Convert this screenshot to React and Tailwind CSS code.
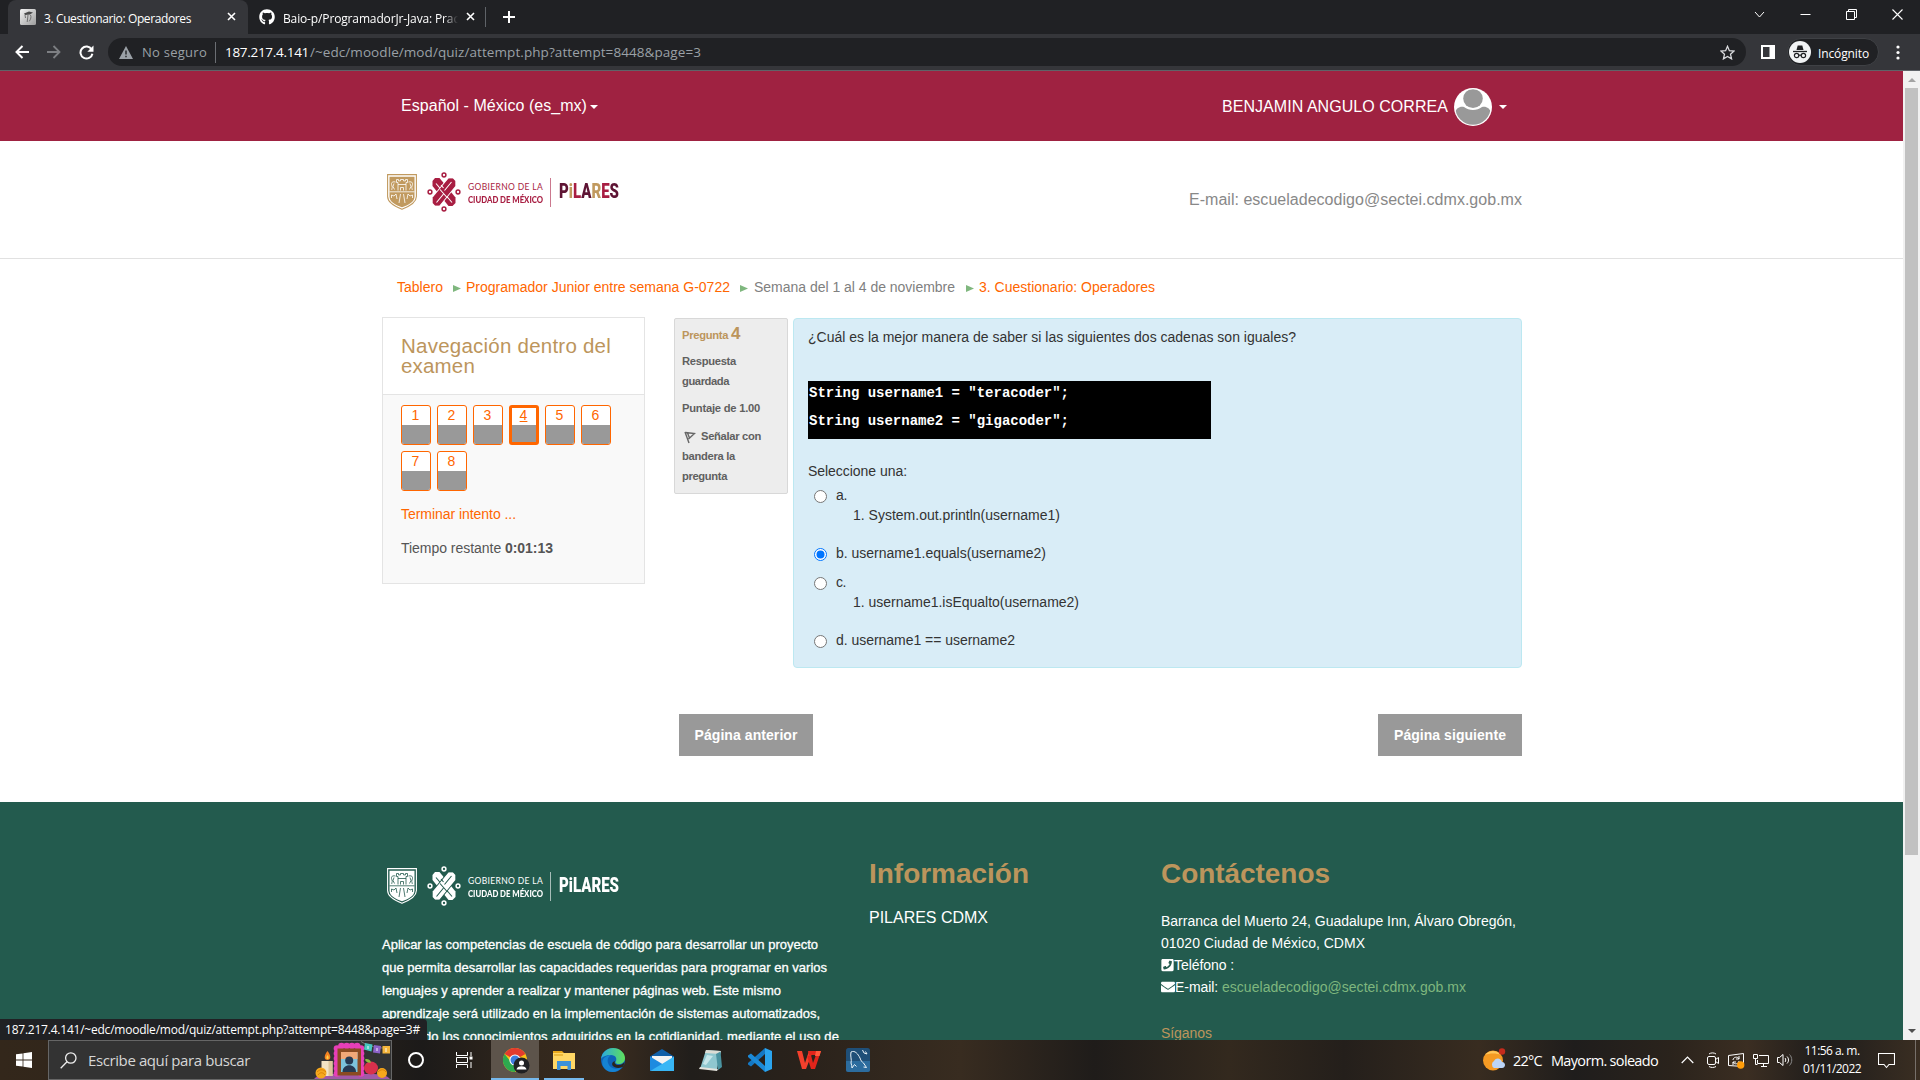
import React, { useLayoutEffect, useRef } from "react";
import { FaGithub, FaPhoneSquare, FaEnvelope } from "react-icons/fa";

// A single line of text that is spaced (or scaled) to an exact width.
function Fit({ w, scale = false, box = "", className = "", children }) {
  const ref = useRef(null);
  useLayoutEffect(() => {
    const el = ref.current;
    el.style.letterSpacing = "0px";
    const natural = el.getBoundingClientRect().width;
    if (scale) {
      el.style.transform = `scaleX(${w / natural})`;
      el.style.transformOrigin = "left center";
    } else {
      el.style.letterSpacing = `${(w - natural) / el.textContent.length}px`;
    }
  }, [w, scale]);
  return (
    <span className={`inline-block shrink-0 ${box}`} style={{ width: w }}>
      <span ref={ref} className={`inline-block whitespace-pre ${className}`}>{children}</span>
    </span>
  );
}

const UI = "font-['Open_Sans','Noto_Sans',sans-serif]";

function Tab({ children, className = "" }) {
  return <div className={`flex h-[34px] items-center pb-[1px] ${className}`}>{children}</div>;
}

function Cross({ className = "" }) {
  return (
    <svg className={`h-[9px] w-[9px] shrink-0 ${className}`} viewBox="0 0 9 9" stroke="#fff" strokeWidth="1.6">
      <path d="M1 1l7 7M8 1l-7 7" />
    </svg>
  );
}

function BrowserChrome() {
  return (
    <div className={`${UI} h-[71px] w-full text-white`}>
      <div className="flex h-[34px] bg-[#202124]">
        <Tab className="ml-[8px] w-[240px] rounded-t-[8px] bg-[#35363a] pl-[12px]">
          <svg className="h-[16px] w-[16px] shrink-0" viewBox="0 0 16 16">
            <defs>
              <linearGradient id="fav" x1="0" x2="1" y1="0" y2="1">
                <stop offset="0" stopColor="#f4f4f4" />
                <stop offset="1" stopColor="#9c9c9c" />
              </linearGradient>
            </defs>
            <rect width="16" height="16" rx="1.5" fill="url(#fav)" />
            <path d="M4 4.500l5-2 4 1-3 2-5 .6z" fill="#4a4a4a" />
            <path d="M5 6l.5 3M8 6l-.8 7M10.500 6c1 2 .3 4-1.200 6.300" fill="none" stroke="#666" strokeWidth=".9" />
          </svg>
          <Fit w={147} box="ml-[8px]" className="text-[12px]">3. Cuestionario: Operadores</Fit>
          <Cross className="ml-[36px]" />
        </Tab>
        <Tab className="w-[238px] pl-[11px]">
          <FaGithub className="h-[16px] w-[16px] shrink-0" />
          <div className="ml-[8px] flex w-[175px] overflow-hidden [mask-image:linear-gradient(to_right,#000_92%,transparent)]">
            <Fit w={176} className="text-[12px]">Baio-p/ProgramadorJr-Java: Prac</Fit>
          </div>
          <Cross className="ml-[8px]" />
          <div className="ml-[10px] h-[20px] w-px shrink-0 bg-[#5f6368]" />
        </Tab>
        <svg className="mt-[11px] ml-[17px] h-[12px] w-[12px]" viewBox="0 0 12 12" stroke="#fff" strokeWidth="2">
          <path d="M6 0v12M0 6h12" />
        </svg>
        <div className="mt-[8px] mr-[17px] ml-auto flex h-[13px] items-center gap-[35px]">
          <svg className="h-[11px] w-[11px]" viewBox="0 0 11 11" fill="none" stroke="#fff"><path d="M1 3l4.500 5L10 3" /></svg>
          <svg className="h-[11px] w-[11px]" viewBox="0 0 11 11" stroke="#fff"><path d="M.5 5.500h10" /></svg>
          <svg className="h-[11px] w-[11px]" viewBox="0 0 11 11" fill="none" stroke="#fff"><path d="M.5 2.500h8v8h-8zM2.500 2.500v-2h8v8h-2" /></svg>
          <svg className="h-[11px] w-[11px]" viewBox="0 0 11 11" stroke="#fff" strokeWidth="1.1"><path d="M.5.5l10 10M10.500 .5l-10 10" /></svg>
        </div>
      </div>
      <div className="flex h-[37px] items-center border-b border-[#5f6368] bg-[#35363a]">
        <svg className="ml-[15px] h-[14px] w-[14px]" viewBox="0 0 14 14" fill="none" stroke="#fff" strokeWidth="2"><path d="M14 7H2M7.500 1L1.500 7l6 6" /></svg>
        <svg className="ml-[18px] h-[14px] w-[14px]" viewBox="0 0 14 14" fill="none" stroke="#7d7f83" strokeWidth="1.800"><path d="M0 7h12M6.500 1l6 6-6 6" /></svg>
        <svg className="ml-[18px] h-[15px] w-[15px]" viewBox="0 0 15 15" fill="none">
          <path d="M12.600 4.400A6 6 0 1 0 13.400 8.700" stroke="#fff" strokeWidth="2" />
          <path d="M14.500 .5v6.200H8.300z" fill="#fff" />
        </svg>
        <div className="ml-[14px] flex h-[28px] w-[1638px] items-center rounded-full bg-[#202124] pl-[11px] text-[14px]">
          <svg className="h-[13px] w-[14px] shrink-0" viewBox="0 0 14 13"><path d="M7 0l7 13H0z" fill="#9aa0a6" /><path d="M7 4.500v4M7 9.700v1.500" stroke="#202124" strokeWidth="1.400" /></svg>
          <Fit w={65} box="ml-[9px]" className="text-[13px] text-[#9aa0a6]">No seguro</Fit>
          <div className="ml-[8px] h-[21px] w-px shrink-0 bg-[#6b6e73]" />
          <Fit w={84} box="ml-[9px]" className="text-[13.500px]">187.217.4.141</Fit>
          <Fit w={391} box="ml-[1px]" className="text-[13.500px] text-[#9aa0a6]">/~edc/moodle/mod/quiz/attempt.php?attempt=8448&page=3</Fit>
          <svg className="mr-[11px] ml-auto h-[15px] w-[15px]" viewBox="0 0 24 24" fill="none" stroke="#dcdde0" strokeWidth="2"><path d="M12 2l3 7 7.500.7-5.700 5 1.700 7.500L12 18.200 5.500 22.200l1.700-7.500-5.700-5L9 9z" /></svg>
        </div>
        <svg className="ml-[15px] h-[14px] w-[14px]" viewBox="0 0 14 14"><path d="M0 0h14v14H0zM2 2v10h6.500V2z" fill="#fff" fillRule="evenodd" /></svg>
        <div className="ml-[12px] flex h-[28px] w-[92px] items-center rounded-full border border-[#3f4145] bg-[#202124]">
          <svg className="ml-px h-[22px] w-[22px] shrink-0" viewBox="0 0 22 22">
            <circle cx="11" cy="11" r="11" fill="#f1f3f4" />
            <path d="M7.500 9l1.200-4.500h4.600L14.500 9z" fill="#202124" />
            <path d="M4 10.500h14" stroke="#202124" strokeWidth="1.300" />
            <g fill="none" stroke="#202124" strokeWidth="1.200"><circle cx="7.600" cy="14.500" r="2.200" /><circle cx="14.400" cy="14.500" r="2.200" /><path d="M9.800 14.200h2.400" /></g>
          </svg>
          <Fit w={51} box="ml-[7px] -mt-px" className="text-[12px]">Incógnito</Fit>
        </div>
        <svg className="ml-[17px] h-[15px] w-[4px]" viewBox="0 0 4 15" fill="#fff"><circle cx="2" cy="2" r="1.600" /><circle cx="2" cy="7.500" r="1.600" /><circle cx="2" cy="13" r="1.600" /></svg>
      </div>
    </div>
  );
}

function Caret({ className = "" }) {
  return <svg className={`h-[4px] w-[8px] ${className}`} viewBox="0 0 8 4"><path d="M0 0h8L4 4z" fill="#fff" /></svg>;
}

function Logo({ light = false }) {
  const gold = light ? "#ffffff" : "#c19a5f";
  const wine = light ? "#ffffff" : "#a81e42";
  const dark = light ? "#ffffff" : "#5e1434";
  const back = light ? "#235b4e" : "#ffffff";
  return (
    <div className="flex h-[40px] items-center">
      <svg className="h-[36px] w-[30px]" viewBox="0 0 30 36">
        <path d="M.6.6h28.800v22c0 6-6 9.500-14.400 12.700C6.600 32.100.6 28.600.6 22.600z" fill={back} stroke={gold} strokeWidth="1.100" />
        <path d="M2.500 2.800h25v19.600c0 5-5 8-12.500 10.900C7.500 30.400 2.500 27.400 2.500 22.400z" fill={gold} />
        <g fill="none" stroke={back} strokeWidth=".8">
          <path d="M11 16.500V8.500H9.500V5.500h2v1.400h2V5.500h3v1.400h2V5.500h2v3H19v8M13.500 16.500v-3h3v3M11 10.500h8" />
          <path d="M8.500 8C4 7 4 10 5 12s-1 3 0 4M7 9.500l-1 3 1.500 3M21.500 8c4.500-1 4.500 2 3.500 4s1 3 0 4M23 9.500l1 3-1.500 3" />
          <path d="M2.500 17.800h25" />
          <path d="M4.500 24v-3l2.500 1 2-2 1 5M25.500 24v-3l-2.500 1-2-2-1 5M13.500 20l-1.500 9M16.500 20l1.500 9" />
        </g>
      </svg>
      <svg className="ml-[10px] h-[40px] w-[34px]" viewBox="0 0 34 40">
        <g fill="none" stroke={wine} strokeWidth="1.500">
          <circle cx="17" cy="3" r="1.900" /><circle cx="17" cy="37" r="1.900" /><circle cx="3" cy="20" r="1.900" /><circle cx="31" cy="20" r="1.900" />
        </g>
        <path d="M8 6h4.500L28.500 25.500V31L25.500 34H21.500L5.500 14V9z" fill={wine} />
        <path d="M9 11.500L25 30.500" stroke={back} strokeWidth="1.100" />
        <path d="M21.500 6h4.500L28.500 9v5L12.500 34H8L5.500 31v-5.500z" fill={wine} stroke={back} strokeWidth="1.300" />
        <path d="M21.500 6.500H26L28.300 9v5L12.500 33.500H8L5.700 31v-5.500z" fill={wine} />
        <path d="M24.500 10L17.500 18.500M16.500 22L9.500 30.500" stroke={back} strokeWidth="1.100" />
        <path d="M13 17.500l7.500 8.500M14 13l2.500 3" stroke={back} strokeWidth="1.100" />
      </svg>
      <div className="ml-[7px] flex w-[76px] flex-col font-['Lato','Open_Sans',sans-serif] leading-[9px]" style={{ color: wine }}>
        <Fit w={75} className="text-[8.500px]">GOBIERNO DE LA</Fit>
        <Fit w={75} scale className="text-[8.500px] font-black">CIUDAD DE MÉXICO</Fit>
      </div>
      <div className="ml-[6px] h-[29px] w-px opacity-60" style={{ background: wine }} />
      <div className="ml-[8px] font-['Roboto',sans-serif] text-[19.500px] leading-[20px] font-black">
        <Fit w={60} scale>
          <span style={{ color: dark }}>P</span>
          <span style={{ color: gold }}>i</span>
          <span style={{ color: wine }}>L</span>
          <span style={{ color: dark }}>A</span>
          <span style={{ color: gold }}>R</span>
          <span style={{ color: wine }}>E</span>
          <span style={{ color: dark }}>S</span>
        </Fit>
      </div>
    </div>
  );
}

function Crumb() {
  return <svg className="mt-[2px] h-[7px] w-[8px]" viewBox="0 0 8 7"><path d="M0 0l8 3.500L0 7z" fill="#7fb77e" /></svg>;
}

function NavNumber({ n, current }) {
  return (
    <div className={`flex h-[40px] w-[30px] flex-col overflow-hidden rounded-[3px] border-[#ff6600] bg-white pr-px text-center text-[14px] leading-[19px] text-[#ff6600] ${current ? "border-[3px]" : "border"}`}>
      <div className={current ? "h-[17px] leading-[15px] underline" : "h-[19px]"}>{n}</div>
      <div className="-mr-px flex-1 bg-[#999999]" />
    </div>
  );
}

function Radio({ on }) {
  return (
    <svg className="h-[13px] w-[13px] shrink-0" viewBox="0 0 13 13">
      <circle cx="6.500" cy="6.500" r="6" fill="#fff" stroke={on ? "#0075ff" : "#767676"} />
      {on && <circle cx="6.500" cy="6.500" r="4" fill="#0075ff" />}
    </svg>
  );
}

function Answer({ on, label, w, className = "" }) {
  return (
    <div className={`flex h-[20px] items-center pl-[6px] ${className}`}>
      <Radio on={on} />
      <Fit w={w} box="-mt-[2px] ml-[9px]">{label}</Fit>
    </div>
  );
}

function Quiz() {
  return (
    <div className="flex h-[397px] items-start pl-[382px] text-[14px]">
      <section className="h-[267px] w-[263px] border border-[#e4e4e4] bg-[#f9f9f9] text-[#555]">
        <h2 className="flex h-[77px] flex-col border-b border-[#e4e4e4] bg-white pt-[18px] pl-[18px] text-[20.500px] leading-[20px] text-[#bc955c]">
          <Fit w={210}>Navegación dentro del</Fit>
          <Fit w={74}>examen</Fit>
        </h2>
        <div className="grid w-[228px] grid-cols-[repeat(6,30px)] gap-x-[6px] gap-y-[6px] pt-[10px] pl-[18px]">
          {[1, 2, 3, 4, 5, 6, 7, 8].map((n) => <NavNumber key={n} n={n} current={n === 4} />)}
        </div>
        <div className="mt-[13px] pl-[18px] leading-[20px] text-[#ff6600]"><Fit w={115}>Terminar intento ...</Fit></div>
        <div className="mt-[14px] flex pl-[18px] leading-[20px]"><Fit w={104}>Tiempo restante </Fit><Fit w={48} className="font-bold">0:01:13</Fit></div>
      </section>

      <section className="mt-px ml-[29px] flex h-[176px] w-[114px] flex-col rounded-[2px] border border-[#d8d8d8] bg-[#ededed] pl-[7px] text-[11.200px] leading-[20px] font-bold text-[#606060]">
        <div className="mt-[5px] flex h-[20px] items-center text-[#bc955c]">
          <Fit w={49} className="mt-[2px]">Pregunta </Fit><span className="text-[17px]">4</span>
        </div>
        <div className="mt-[7px] h-[20px]"><Fit w={54}>Respuesta</Fit></div>
        <div className="h-[20px]"><Fit w={47}>guardada</Fit></div>
        <div className="mt-[7px] h-[20px]"><Fit w={78}>Puntaje de 1.00</Fit></div>
        <div className="mt-[8px] flex h-[20px] items-center">
          <svg className="mt-[3px] ml-[2px] h-[13px] w-[12px]" viewBox="0 0 12 13" fill="none" stroke="#666" strokeWidth="1.400"><path d="M1 1l4 11M1.500 1.500l9 1L4.500 8M3.500 2l2 5" /></svg>
          <Fit w={60} box="ml-[5px]">Señalar con</Fit>
        </div>
        <div className="h-[20px]"><Fit w={53}>bandera la</Fit></div>
        <div className="h-[20px]"><Fit w={45}>pregunta</Fit></div>
      </section>

      <section className="mt-px ml-[5px] h-[350px] w-[729px] rounded-[4px] border border-[#bce8f1] bg-[#d9edf7] pl-[14px] leading-[20px] text-[#333]">
        <div className="mt-[8px] h-[20px]"><Fit w={488}>¿Cuál es la mejor manera de saber si las siguientes dos cadenas son iguales?</Fit></div>
        <div className="mt-[34px] h-[58px] w-[403px] bg-black pl-[1px] font-['Liberation_Mono',monospace] leading-[24px] font-bold text-white">
          <div className="h-[28px]"><Fit w={260}>{'String username1 = "teracoder";'}</Fit></div>
          <div className="h-[28px]"><Fit w={260}>{'String username2 = "gigacoder";'}</Fit></div>
        </div>
        <div className="mt-[22px] h-[20px]"><Fit w={99}>Seleccione una:</Fit></div>
        <Answer label="a." w={11} className="mt-[5px]" />
        <div className="h-[20px] -translate-y-px pl-[45px]"><Fit w={207}>1. System.out.println(username1)</Fit></div>
        <Answer on label="b. username1.equals(username2)" w={210} className="mt-[18px]" />
        <Answer label="c." w={10} className="mt-[9px]" />
        <div className="h-[20px] -translate-y-px pl-[45px]"><Fit w={226}>1. username1.isEqualto(username2)</Fit></div>
        <Answer label="d. username1 == username2" w={179} className="mt-[18px]" />
      </section>
    </div>
  );
}

function Footer() {
  return (
    <footer className="flex h-[238px] items-start overflow-hidden bg-[#235b4e] pl-[382px] text-white">
      <div className="w-[488px]">
        <div className="mt-[64px] ml-[5px]"><Logo light /></div>
        <div className="mt-[27px] flex flex-col text-[13px] leading-[23px] font-medium [-webkit-text-stroke:0.3px_#fff]">
          <Fit w={436}>Aplicar las competencias de escuela de código para desarrollar un proyecto</Fit>
          <Fit w={445}>que permita desarrollar las capacidades requeridas para programar en varios</Fit>
          <Fit w={399}>lenguajes y aprender a realizar y mantener páginas web. Este mismo</Fit>
          <Fit w={438}>aprendizaje será utilizado en la implementación de sistemas automatizados,</Fit>
          <Fit w={457}>aplicando los conocimientos adquiridos en la cotidianidad, mediante el uso de</Fit>
        </div>
      </div>
      <div className="-ml-px w-[291px]">
        <h3 className="mt-[52px] text-[28px] leading-[40px] font-bold text-[#bc955c]"><Fit w={160}>Información</Fit></h3>
        <div className="mt-[12px] text-[16px] leading-[24px]"><Fit w={119}>PILARES CDMX</Fit></div>
      </div>
      <div className="ml-px flex flex-col text-[14px] leading-[22px]">
        <h3 className="mt-[52px] text-[28px] leading-[40px] font-bold text-[#bc955c]"><Fit w={169}>Contáctenos</Fit></h3>
        <div className="mt-[16px]"><Fit w={355}>Barranca del Muerto 24, Guadalupe Inn, Álvaro Obregón,</Fit></div>
        <div><Fit w={204}>01020 Ciudad de México, CDMX</Fit></div>
        <div className="flex items-center"><FaPhoneSquare className="h-[14px] w-[13px]" /><Fit w={60}>Teléfono :</Fit></div>
        <div className="flex items-center"><FaEnvelope className="h-[14px] w-[14px]" /><Fit w={47}>E-mail: </Fit><Fit w={244} className="text-[#7fb77e]">escueladecodigo@sectei.cdmx.gob.mx</Fit></div>
        <div className="mt-[24px] text-[#bc955c]"><Fit w={51}>Síganos</Fit></div>
      </div>
    </footer>
  );
}

function Page() {
  return (
    <div className="relative flex h-[969px] w-full font-['Liberation_Sans',Arial,sans-serif]">
      <div className="h-full w-[1903px] overflow-hidden bg-white">
        <div className="flex h-[70px] items-center bg-[#9f2241] pr-[396px] pl-[401px] text-[16px] text-white">
          <Fit w={186}>Español - México (es_mx)</Fit><Caret className="mt-[2px] ml-[3px]" />
          <div className="ml-auto flex items-center">
            <Fit w={226} box="mt-px">BENJAMIN ANGULO CORREA</Fit>
            <svg className="mt-[2px] ml-[6px] h-[38px] w-[38px]" viewBox="0 0 38 38">
              <defs><clipPath id="face"><circle cx="19" cy="19" r="17.800" /></clipPath></defs>
              <circle cx="19" cy="19" r="19" fill="#fff" />
              <g clipPath="url(#face)" fill="#999">
                <path d="M1 25c1-5 5-7 9-6 5 4 13 4 18 0 4-1 8 1 9 6v13H1z" />
                <ellipse cx="19" cy="10.500" rx="9.800" ry="9.500" />
              </g>
            </svg>
            <Caret className="mt-[2px] ml-[7px]" />
          </div>
        </div>
        <div className="flex h-[118px] items-start border-b border-[#e1e1e1] pl-[387px] text-[16px]">
          <div className="mt-[31px] w-[802px]"><Logo /></div>
          <div className="mt-[47px] leading-[24px] text-[#888]"><Fit w={333}>E-mail: escueladecodigo@sectei.cdmx.gob.mx</Fit></div>
        </div>
        <nav className="flex h-[58px] items-center pb-[2px] pl-[397px] text-[14px] text-[#ff6600]">
          <Fit w={46}>Tablero</Fit><span className="w-[10px]" /><Crumb /><span className="w-[5px]" />
          <Fit w={264}>Programador Junior entre semana G-0722</Fit><span className="w-[10px]" /><Crumb /><span className="w-[6px]" />
          <Fit w={201} className="text-[#808080]">Semana del 1 al 4 de noviembre</Fit><span className="w-[11px]" /><Crumb /><span className="w-[5px]" />
          <Fit w={176}>3. Cuestionario: Operadores</Fit>
        </nav>
        <Quiz />
        <div className="flex h-[88px] items-start pl-[679px] text-[14px] font-bold text-white">
          <div className="flex h-[42px] w-[134px] items-center justify-center bg-[#999999]"><Fit w={103}>Página anterior</Fit></div>
          <div className="ml-[565px] flex h-[42px] w-[144px] items-center justify-center bg-[#999999]"><Fit w={112}>Página siguiente</Fit></div>
        </div>
        <Footer />
      </div>
      <div className="flex h-full w-[17px] flex-col items-center bg-[#f1f1f1]">
        <svg className="mt-[7px] h-[4px] w-[8px]" viewBox="0 0 8 4"><path d="M0 4h8L4 0z" fill="#a3a3a3" /></svg>
        <div className="mt-[6px] h-[767px] w-[13px] bg-[#c1c1c1]" />
        <svg className="mt-auto mb-[7px] h-[4px] w-[8px]" viewBox="0 0 8 4"><path d="M0 0h8L4 4z" fill="#505050" /></svg>
      </div>
      <div className={`${UI} absolute bottom-0 left-0 flex h-[21px] w-[427px] items-center rounded-tr-[4px] bg-[#202124] pl-[5px] text-[12px] text-white`}>
        <Fit w={415}>187.217.4.141/~edc/moodle/mod/quiz/attempt.php?attempt=8448&page=3#</Fit>
      </div>
    </div>
  );
}

function Ofrenda() {
  const bumps = [];
  for (let i = 0; i < 6; i++) bumps.push([23, 7.5 + i * 5], [47, 7.5 + i * 5]);
  for (let i = 0; i < 4; i++) bumps.push([27.500 + i * 5.200, 5]);
  return (
    <svg className="h-[38px] w-[76px]" viewBox="0 0 76 38">
      <path d="M0 38c3-4 10-5 18-5h38c10 0 17 1 20 5z" fill="#a259a8" />
      <rect x="7.500" y="20" width="11" height="15" fill="#f2e3c4" /><rect x="14.500" y="20" width="4" height="15" fill="#dcc59a" />
      <path d="M13.500 10c4 5 3.500 9 0 9s-4-4 0-9z" fill="#f58220" /><path d="M13.500 14c1.500 2 1.500 4 0 4s-1.500-2 0-4z" fill="#ffd54a" />
      {bumps.map(([x, y], i) => <circle key={i} cx={x} cy={y} r="3.300" fill="#e83fb8" />)}
      <rect x="23.500" y="7.500" width="23.500" height="27" fill="#8a4b22" />
      <rect x="27" y="11" width="16.500" height="20" fill="#7cc4dc" /><rect x="27" y="11" width="16.500" height="7" fill="#f0a878" />
      <circle cx="35.200" cy="19.500" r="4" fill="#263a52" /><path d="M28.500 31c0-9 13.500-9 13.500 0z" fill="#263a52" />
      <ellipse cx="57" cy="27" rx="7" ry="6.500" fill="#d9304c" /><path d="M57 21.500c-1-4-6-4-6-2.500 1 2 4 3.500 6 2.500z" fill="#8bbf3f" />
      <circle cx="7" cy="32" r="5.500" fill="#f6a81c" /><path d="M3 31c3-3 6-3 9 0M4 34c2-3 5-3 7 0" stroke="#d98208" fill="none" />
      <circle cx="68" cy="32" r="5" fill="#f6a81c" /><path d="M64 31c3-3 6-3 8 0" stroke="#d98208" fill="none" />
      <path d="M47 .5l5 3 10 3 14 1" stroke="#777" fill="none" />
      <path d="M51 2l7.500 1.500-1 7-7.500-2z" fill="#48c7c1" /><path d="M60 4l7 1-1 7.500-7-1z" fill="#8d62c9" /><path d="M68.500 5H76v7.500h-7.500z" fill="#f4b53c" />
      <path d="M54 5v3M63 7v3M72 7v4" stroke="#fff" strokeWidth="1.500" opacity=".6" />
    </svg>
  );
}

function Slot({ children, className = "" }) {
  return <div className={`flex h-[40px] shrink-0 items-center justify-center ${className}`}>{children}</div>;
}

function Taskbar() {
  return (
    <div className={`${UI} flex h-[40px] w-full items-center bg-[linear-gradient(90deg,#33271b_0%,#2c241b_16%,#1c1a19_22%,#33281d_28%,#382b1f_32%,#211e1b_36%,#2a221b_42%,#382c20_50%,#1f1c1a_57%,#33291e_64%,#241f1b_70%,#382c20_77%,#1f1d1c_82%,#2a231c_87%,#3b2e22_91%,#1e1c1b_95%,#3a2e22_100%)] text-white`}>
      <Slot className="w-[48px]">
        <svg className="h-[16px] w-[16px]" viewBox="0 0 16 16" fill="#fff"><path d="M0 2.300L6.600 1.400v6.200H0zM7.400 1.300L16 0v7.600H7.400zM0 8.400h6.600v6.200L0 13.700zM7.400 8.400H16V16l-8.600-1.300z" /></svg>
      </Slot>
      <div className="flex h-[40px] w-[344px] items-center border border-[#666] bg-[#333] pl-[11px]">
        <svg className="h-[17px] w-[17px] shrink-0" viewBox="0 0 17 17" fill="none" stroke="#eee" strokeWidth="1.300"><circle cx="10.800" cy="6" r="5.200" /><path d="M7 9.800L.7 16.300" /></svg>
        <Fit w={162} box="ml-[11px]" className="text-[15px] text-[#d6d6d6]">Escribe aquí para buscar</Fit>
        <div className="mr-px ml-auto flex"><Ofrenda /></div>
      </div>
      <Slot className="w-[48px]"><div className="h-[16px] w-[16px] rounded-full border-2 border-white" /></Slot>
      <Slot className="w-[48px]">
        <svg className="h-[16px] w-[17px]" viewBox="0 0 17 16" fill="none" stroke="#fff"><path d="M.5 0v3.500h11V0M.5 16v-3.500h11V16M.5 5.500h11v5H.5zM15 0v4M15 10v6" /><path d="M13.500 4.500h3v3h-3z" fill="#fff" stroke="none" /></svg>
      </Slot>
      <div className="ml-[3px] flex h-[40px] w-[48px] flex-col bg-[#5d544b]">
        <div className="flex h-[38px] items-center pt-[3px] pl-[12px]">
          <svg className="h-[26px] w-[27px]" viewBox="0 0 27 26">
            <circle cx="12" cy="12" r="12" fill="#fbc116" />
            <path d="M12 12L1.600 6A12 12 0 0 1 22.400 6z" fill="#e33b2e" /><path d="M1.600 6A12 12 0 0 0 12 24l5-9-9-1z" fill="#2da94f" />
            <circle cx="12" cy="12" r="5.600" fill="#fff" /><circle cx="12" cy="12" r="4.500" fill="#3f7de0" />
            <circle cx="18.500" cy="17.500" r="8" fill="#202124" /><circle cx="18.500" cy="15" r="2.500" fill="#fff" /><path d="M13.500 21.500c0-4.500 10-4.500 10 0z" fill="#fff" />
          </svg>
        </div>
        <div className="h-[2px] bg-[#76b9ed]" />
      </div>
      <div className="ml-[5px] flex h-[40px] w-[40px] flex-col">
        <div className="flex h-[38px] items-center pt-[1px] pl-[9px]">
          <svg className="h-[20px] w-[22px]" viewBox="0 0 22 20"><path d="M0 1h9l2 2H0z" fill="#e9a91d" /><path d="M0 3h22v16H0z" fill="#ffd765" /><path d="M4 11h14v9h-3.500v-4h-7v4H4z" fill="#3c92d9" /><path d="M1 5h9" stroke="#d99b12" /></svg>
        </div>
        <div className="h-[2px] bg-[#76b9ed]" />
      </div>
      <Slot className="ml-[4px] w-[49px]">
        <svg className="h-[24px] w-[24px]" viewBox="0 0 24 24">
          <defs>
            <linearGradient id="edgeTop" x1="0" x2="1"><stop offset="0" stopColor="#2aa8e0" /><stop offset="1" stopColor="#5fe05a" /></linearGradient>
          </defs>
          <circle cx="12" cy="12" r="12" fill="#0e63b8" />
          <path d="M0 11C1 4 6 0 12 0c7 0 12 5 12 10 0 4-3 6-6 6-4 0-4-2-3-3 1-2 0-6-5-6S1 9 0 11z" fill="url(#edgeTop)" />
          <path d="M10 7c-3 2-4 5-3 8 2 6 8 7 14 4-4 6-12 6-16 3C-1 17 0 8 10 7z" fill="#1583d3" />
          <path d="M14 13c-1 2 0 4 4 4 2 0 4-1 5.500-3l-1 4.500c-3 2-9 2-11-1-1-2 0-4 2.500-4.500z" fill="#2b241c" />
        </svg>
      </Slot>
      <Slot className="w-[49px]">
        <svg className="h-[24px] w-[24px]" viewBox="0 0 24 24"><path d="M0 8.500L12 1l12 7.500v6H0z" fill="#0f5fa8" /><path d="M2 8h20v9H2z" fill="#f3f3f3" /><path d="M0 8.500L14 17 0 23z" fill="#1d8be0" /><path d="M24 8.500V23H0l12-7z" fill="#38b6f5" /></svg>
      </Slot>
      <Slot className="w-[49px]">
        <svg className="h-[24px] w-[24px]" viewBox="0 0 24 24"><path d="M7 2l15 1-4 18H1z" fill="#8fc7cf" /><path d="M7 2l15 1-1 3L6 5z" fill="#dcdcd4" /><path d="M17 6l4.500-2.500L23 19l-4 3z" fill="#4b93a0" /><path d="M1 19l18 2-1 2L0 21z" fill="#e4e4de" /><path d="M8 7l6 1-7 9-3-1z" fill="#c6e6ea" /></svg>
      </Slot>
      <Slot className="w-[49px]">
        <svg className="h-[24px] w-[24px]" viewBox="0 0 24 24"><path d="M17 0l7 3v18l-7 3z" fill="#2ba4ee" /><path d="M17 0v6L3 18.500 0 16.500v-1.500z" fill="#1478c4" /><path d="M17 24v-6L3 5.500 0 7.500V9z" fill="#1b8ad8" /></svg>
      </Slot>
      <Slot className="w-[49px]">
        <svg className="h-[20px] w-[24px]" viewBox="0 0 24 20"><path d="M0 1h5l3 12 4-12h4l-7 18H5z" fill="#f4402c" /><path d="M10 6l4-1 2 8 3-8h-7l-1-4h13l-6 18h-4z" fill="#e1251b" /><path d="M19 1h5l-1.500 5H18z" fill="#ff5a3c" /></svg>
      </Slot>
      <Slot className="w-[49px]">
        <svg className="h-[24px] w-[24px]" viewBox="0 0 24 24"><rect width="24" height="24" rx="2.500" fill="#1f4f78" /><path d="M0 13h24v8.500a2.500 2.500 0 0 1-2.500 2.500h-19A2.500 2.500 0 0 1 0 21.500z" fill="#2c6c9e" /><path d="M6 20c0-2-.5-3-1-5 1-3-1-7 0-11 4-2 7 2 9 6 1 3 2 4 3.500 5l3 4.500-3-.5M6 20l2.500-3.500 2 2M16.500 2l1.500 3 3 1M19.500 3.500l1.500 2.500" fill="none" stroke="#e8f1f7" strokeWidth="1" /></svg>
      </Slot>
      <div className="ml-auto flex h-[40px] items-center">
        <svg className="h-[24px] w-[24px]" viewBox="0 0 24 24"><circle cx="10" cy="12.500" r="10" fill="#f59a23" /><path d="M2 7a10 10 0 0 1 16 0c-4-2-12-2-16 0z" fill="#ffc65a" /><path d="M11 20a4 4 0 0 1 0-7c2-4 7-3 8 1 4 0 4 6 0 6z" fill="#bcd5f7" /><circle cx="19" cy="3.500" r="3.200" fill="#c42b1c" /></svg>
        <Fit w={29} box="ml-[6px]" className="text-[14.500px]">22°C</Fit>
        <Fit w={107} box="ml-[9px]" className="text-[14.500px]">Mayorm. soleado</Fit>
      </div>
      <div className="mr-[4px] ml-[23px] flex h-[40px] items-center">
        <svg className="h-[8px] w-[13px]" viewBox="0 0 13 8" fill="none" stroke="#fff" strokeWidth="1.200"><path d="M.7 7l5.800-6 5.800 6" /></svg>
        <svg className="ml-[13px] h-[16px] w-[12px]" viewBox="0 0 12 16" fill="none" stroke="#fff"><rect x=".5" y="4.500" width="8" height="8" rx="1.500" /><path d="M8.500 7.500l3-2v6l-3-2M2 2c2-1.500 5-1.500 7 0M2 14.500c2 1.300 5 1.300 7 0" /></svg>
        <svg className="ml-[9px] h-[17px] w-[17px]" viewBox="0 0 17 17" fill="none" stroke="#fff"><path d="M.5 3.500l15-2v13l-15-1z" /><path d="M5 8c0-3 5-4 6-1M11 4v3H8M11 9c0 3-5 4-6 1M5 13v-3h3" /><circle cx="12.700" cy="13" r="3.700" fill="#ff9d0a" stroke="none" /></svg>
        <svg className="ml-[8px] h-[14px] w-[16px]" viewBox="0 0 16 14" fill="none" stroke="#fff"><path d="M6 2.500h9.500v8H4.500V7M8 13.500h6M10.500 10.500v3M.5 1.500h4v4h-4zM2.500 5.500v6h2" /></svg>
        <svg className="ml-[8px] h-[14px] w-[16px]" viewBox="0 0 16 14" fill="none" stroke="#fff"><path d="M.5 4.500h2L6 1.500v11l-3.500-3h-2zM8 5c1 1 1 3 0 4M10 3.500c2 2 2 5 0 7" /><path d="M12.500 1.500c3 3 3 8 0 11" stroke="#888" /></svg>
        <div className="ml-[10px] flex flex-col items-center text-[12px] leading-[18px]">
          <Fit w={55}>11:56 a. m.</Fit><Fit w={58}>01/11/2022</Fit>
        </div>
        <svg className="mt-[1px] ml-[17px] h-[17px] w-[17px]" viewBox="0 0 17 17" fill="none" stroke="#fff" strokeWidth="1.100"><path d="M.5 1.500h16v11h-5.500l-2.500 3-2.500-3H.5z" /></svg>
        <div className="ml-[20px] h-[40px] w-px bg-[#77706a]" />
      </div>
    </div>
  );
}

export default function App() {
  return (
    <main className="h-[1080px] w-[1920px] overflow-hidden">
      <BrowserChrome />
      <Page />
      <Taskbar />
    </main>
  );
}
